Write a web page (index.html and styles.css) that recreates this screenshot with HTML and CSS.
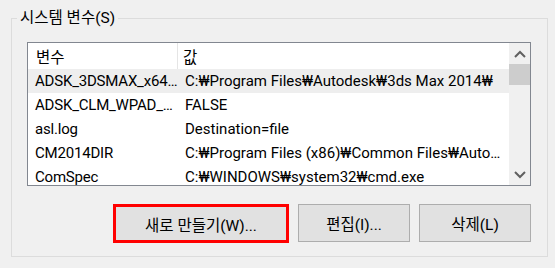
FILE: index.html
```html
<!DOCTYPE html>
<html lang="ko">
<head>
<meta charset="utf-8">
<link rel="stylesheet" href="styles.css">
</head>
<body>
<fieldset class="group">
  <legend class="group-title">시스템 변수(S)</legend>
  <div class="list">
    <div class="list-main">
      <div class="row header">
        <div class="cell name">변수</div>
        <div class="cell value">값</div>
      </div>
      <div class="row selected">
        <div class="cell name">ADSK_3DSMAX_x64…</div>
        <div class="cell value">C:₩Program Files₩Autodesk₩3ds Max 2014₩</div>
      </div>
      <div class="row">
        <div class="cell name">ADSK_CLM_WPAD_…</div>
        <div class="cell value">FALSE</div>
      </div>
      <div class="row">
        <div class="cell name">asl.log</div>
        <div class="cell value">Destination=file</div>
      </div>
      <div class="row">
        <div class="cell name">CM2014DIR</div>
        <div class="cell value">C:₩Program Files (x86)₩Common Files₩Auto…</div>
      </div>
      <div class="row">
        <div class="cell name">ComSpec</div>
        <div class="cell value">C:₩WINDOWS₩system32₩cmd.exe</div>
      </div>
    </div>
    <div class="scrollbar">
      <div class="sb-btn">
        <svg width="12" height="8" viewBox="0 0 12 8"><path d="M1 7 L6 2 L11 7" fill="none" stroke="#606060" stroke-width="2"/></svg>
      </div>
      <div class="sb-thumb"></div>
      <div class="sb-track"></div>
      <div class="sb-btn">
        <svg width="12" height="8" viewBox="0 0 12 8"><path d="M1 1 L6 6 L11 1" fill="none" stroke="#606060" stroke-width="2"/></svg>
      </div>
    </div>
  </div>
  <div class="buttons">
    <button class="btn btn-new">새로 만들기(W)...</button>
    <button class="btn">편집(I)...</button>
    <button class="btn">삭제(L)</button>
  </div>
</fieldset>
</body>
</html>
```
FILE: styles.css
```css
html, body {
  margin: 0;
  padding: 0;
  background: #f0f0f0;
  width: 555px;
  height: 268px;
  overflow: hidden;
  font-family: "Roboto", "Noto Sans CJK KR", sans-serif;
  font-size: 15px;
  color: #000;
}

.group {
  box-sizing: border-box;
  width: 537px;
  margin: 8px 0 0 11px;
  padding: 14px 16px 13px 15px;
  border: 1px solid #dcdcdc;
  min-width: 0;
}

.group-title {
  padding: 0 3px;
  margin-left: -10px;
  line-height: 20px;
  height: 20px;
  font-size: 15.5px;
}

.list {
  box-sizing: border-box;
  width: 504px;
  height: 144px;
  border: 1px solid #828790;
  background: #fff;
  display: flex;
  overflow: hidden;
}

.list-main {
  flex: 1;
  overflow: hidden;
}

.row {
  display: flex;
  height: 24px;
  line-height: 24px;
  white-space: nowrap;
}

.row.header {
  height: 26px;
  line-height: 26px;
  padding-top: 2px;
  box-sizing: border-box;
  font-size: 15.5px;
}

.row.selected {
  background: #eeeeee;
}

.cell {
  overflow: hidden;
  box-sizing: border-box;
}

.cell.name {
  width: 150px;
  padding-left: 7px;
  letter-spacing: -0.2px;
}

.cell.value {
  flex: 1;
  padding-left: 7px;
}

.header .cell.name {
  border-right: 1px solid #e5e5e5;
  padding-left: 8px;
  margin-top: -2px;
  padding-top: 2px;
  letter-spacing: 0;
}

.header .cell.value {
  padding-left: 5px;
}

.scrollbar {
  width: 21px;
  background: #f0f0f0;
  display: flex;
  flex-direction: column;
}

.sb-btn {
  height: 21px;
  display: flex;
  align-items: center;
  justify-content: center;
}

.sb-thumb {
  height: 21px;
  background: #cdcdcd;
}

.sb-track {
  flex: 1;
}

.buttons {
  display: flex;
  justify-content: flex-end;
  align-items: flex-start;
  gap: 9px;
  margin-top: 18px;
}

.btn {
  box-sizing: border-box;
  width: 112px;
  height: 38px;
  border: 1px solid #adadad;
  background: #e1e1e1;
  font-family: "Roboto", "Noto Sans CJK KR", sans-serif;
  font-size: 15.5px;
  color: #000;
  padding: 0;
}

.btn-new {
  width: 176px;
  height: 39px;
  border: 3px solid #ff0000;
}
```
